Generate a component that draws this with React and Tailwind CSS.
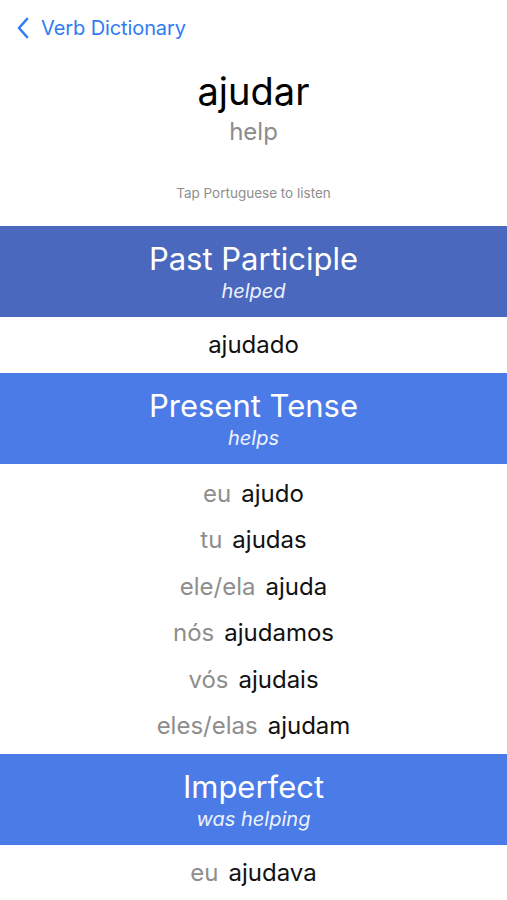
import React from "react";

const sections = [
  {
    title: "Past Participle",
    sub: "helped",
    bg: "bg-[#4a68bd]",
    rows: [{ p: "", v: "ajudado" }],
  },
  {
    title: "Present Tense",
    sub: "helps",
    bg: "bg-[#4a7be7]",
    rows: [
      { p: "eu", v: "ajudo" },
      { p: "tu", v: "ajudas" },
      { p: "ele/ela", v: "ajuda" },
      { p: "nós", v: "ajudamos" },
      { p: "vós", v: "ajudais" },
      { p: "eles/elas", v: "ajudam" },
    ],
  },
  {
    title: "Imperfect",
    sub: "was helping",
    bg: "bg-[#4a7be7]",
    rows: [{ p: "eu", v: "ajudava" }],
  },
];

const App = () => {
  return (
    <div className="w-[507px] h-[900px] overflow-hidden bg-white font-['Inter',sans-serif]">
      {/* Nav bar */}
      <div className="flex items-center h-[56px] pl-[15px] text-[#2f7bf2]">
        <svg width="16" height="24" viewBox="0 0 16 24" className="mr-[10px] mb-[1px]">
          <path d="M12 3 L4 12 L12 21" fill="none" stroke="currentColor" strokeWidth="2.6" strokeLinecap="round" strokeLinejoin="round" />
        </svg>
        <span className="text-[20px] tracking-[-0.1px]">Verb Dictionary</span>
      </div>

      {/* Verb heading */}
      <div className="flex flex-col items-center">
        <h1 className="text-[38px] leading-[46px] text-black mt-[12px]">ajudar</h1>
        <p className="text-[24px] leading-[30px] text-[#8c8c8c] mt-[3px]">help</p>
        <p className="text-[13.5px] text-[#8e8e8e] mt-[36px] mb-[23px]">Tap Portuguese to listen</p>
      </div>

      {sections.map((s, i) => (
        <div key={i}>
          <div className={`${s.bg} h-[91px] flex flex-col items-center justify-center text-white`}>
            <h2 className="text-[31px] leading-[36px] mt-[1px]">{s.title}</h2>
            <p className="text-[20px] leading-[24px] italic text-[#eef2fc] mt-[2px]">{s.sub}</p>
          </div>
          <div className={s.rows.length > 1 ? "pt-[6px] pb-[5px]" : ""}>
            {s.rows.map((r, j) => (
              <div
                key={j}
                className={`${s.rows.length === 1 ? "h-[56px]" : "h-[46.5px]"} flex items-center justify-center gap-[10px] text-[24px]`}
              >
                {r.p && <span className="text-[#8e8e8e]">{r.p}</span>}
                <span className="text-[#111]">{r.v}</span>
              </div>
            ))}
          </div>
        </div>
      ))}
    </div>
  );
};

export default App;
